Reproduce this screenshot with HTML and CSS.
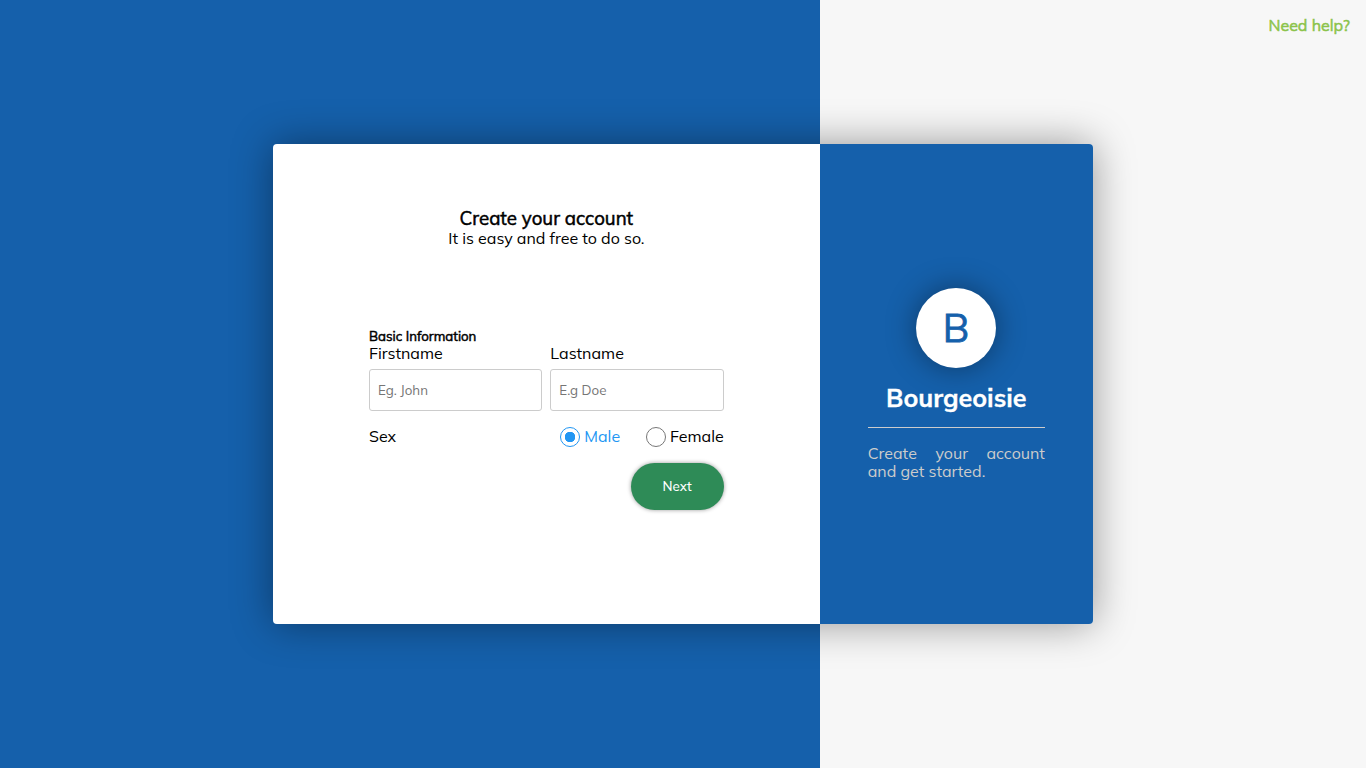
FILE: index.html
```html
<!DOCTYPE html>
<html lang="en">
<head>
<meta charset="utf-8">
<title>Create your account</title>
<link rel="stylesheet" href="styles.css">
</head>
<body>
<a class="help">Need help?</a>
<main class="card">
  <section class="main">
    <header class="intro">
      <h1>Create your account</h1>
      <p>It is easy and free to do so.</p>
    </header>
    <form class="form">
      <h2>Basic Information</h2>
      <div class="names">
        <label>Firstname<input type="text" placeholder="Eg. John"></label>
        <label>Lastname<input type="text" placeholder="E.g Doe"></label>
      </div>
      <div class="sex">
        <span class="sex-label">Sex</span>
        <span class="option male"><i class="radio checked"></i><span>Male</span></span>
        <span class="option female"><i class="radio"></i><span>Female</span></span>
      </div>
      <button type="button" class="next">Next</button>
    </form>
  </section>
  <aside class="brand">
    <div class="logo">B</div>
    <h3>Bourgeoisie</h3>
    <hr>
    <p>Create your account and get started.</p>
  </aside>
</main>
</body>
</html>
```
FILE: styles.css
```css
* { box-sizing: border-box; margin: 0; padding: 0; }
body {
  height: 768px;
  display: flex;
  align-items: center;
  justify-content: center;
  overflow: hidden;
  background: linear-gradient(90deg, #1560ab 820px, #f7f7f7 820px);
  font: 16px/18px Mulish, Muli, Lato, sans-serif;
  color: #000;
}
.help, h1, h2 { font-weight: 400; -webkit-text-stroke: .5px currentColor; }
.help { position: absolute; top: 16px; right: 16px; color: #8bc34a; }
.card {
  display: flex;
  width: 820px;
  height: 480px;
  border-radius: 4px;
  box-shadow: 0 0 40px rgba(0,0,0,.4);
}
.main { width: 546.67px; padding: 63px 96px; background: #fff; border-radius: 4px 0 0 4px; }
.intro { text-align: center; }
h1 { font-size: 18.72px; line-height: 22px; }
.form { margin-top: 81px; display: flex; flex-direction: column; }
h2 { font-size: 13.28px; line-height: 17px; margin-bottom: -1px; }
.names { display: grid; grid-template-columns: 1fr 1fr; gap: 8px; }
label { display: block; }
input {
  display: block; width: 100%; height: 42px; margin-top: 7px; padding: 0 8px;
  border: 1px solid #ccc; border-radius: 3px; font: 13.33px Mulish, Muli, Lato, sans-serif;
}
input::placeholder { color: #757575; }
.sex { display: flex; align-items: center; margin-top: 16px; height: 20px; }
.sex-label { flex: 1; }
.option { display: flex; align-items: center; gap: 4px; }
.option > span, .sex-label { margin-top: -2px; }
.male { color: #2196f3; margin-right: 26px; }
.radio { width: 20px; height: 20px; border: 1px solid #777; border-radius: 50%; }
.checked { border-color: #2196f3; background: radial-gradient(circle, #2196f3 5px, transparent 5.5px); }
.next {
  align-self: flex-end; width: 93px; height: 47px; padding-bottom: 2px; margin-top: 16px; border: 0; border-radius: 24px;
  background: #2e8b57; color: #fff; font: 500 13.33px Mulish, Muli, Lato, sans-serif;
  box-shadow: 0 0 4px rgba(0,0,0,.4);
}
.brand { width: 273.33px; padding: 144px 48px 0; background: #1560ab; color: #ccc; border-radius: 0 4px 4px 0; }
.logo {
  width: 80px; height: 80px; margin: 0 0 16px 48.33px; border-radius: 50%; background: #fff; color: #1560ab;
  font-size: 39px; line-height: 80px; text-align: center; -webkit-text-stroke: .8px currentColor;
  box-shadow: 0 0 30px rgba(0,0,0,.4);
}
h3 { color: #fff; font-size: 25.1px; font-weight: 700; line-height: 28px; text-align: center; -webkit-text-stroke: .3px currentColor; }
hr { border: 0; border-top: 1px solid #ccc; margin: 15px 0 16px; }
.brand p { text-align: justify; }
```
